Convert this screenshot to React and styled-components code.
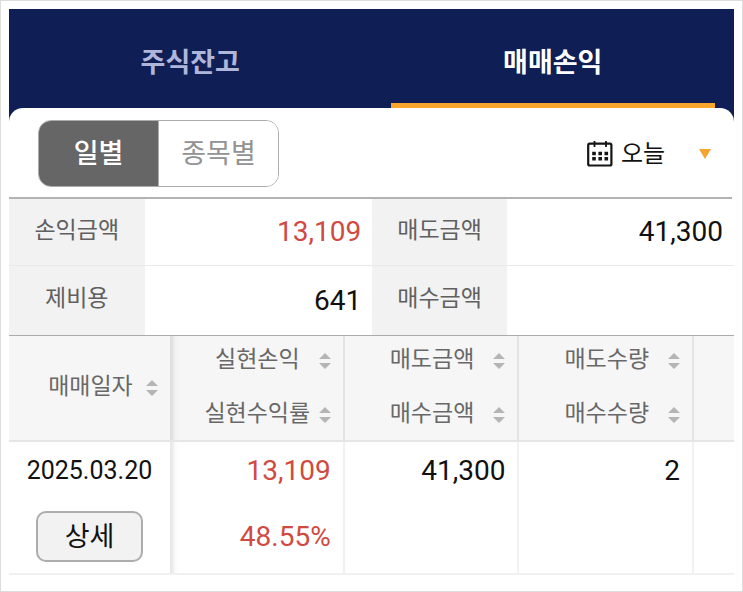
import React, { useState } from "react";
import styled, { createGlobalStyle, css } from "styled-components";

const GlobalStyle = createGlobalStyle`
  *, *::before, *::after { box-sizing: border-box; }
  body {
    margin: 0;
    background: #fff;
    font-family: Roboto, "Noto Sans CJK KR", sans-serif;
    color: #111;
  }
  button, select { font-family: inherit; }
`;

const Frame = styled.main`
  min-height: 100vh;
  padding: 8px;
  border: 1px solid #dcdcdc;
`;

const Nav = styled.nav`
  display: grid;
  grid-template-columns: 1fr 1fr;
  padding-bottom: 14px;
  background: #0f1e54;
`;

const NavTab = styled.button`
  display: flex;
  flex-direction: column;
  align-items: stretch;
  height: 99px;
  padding: 0 19px;
  border: 0;
  background: none;
  font-size: 27px;
  font-weight: 700;
  color: ${(p) => (p.$active ? "#fff" : "#b0b6da")};
  cursor: pointer;
`;

const NavLabel = styled.span`
  flex: 1;
  line-height: 108px;
  height: 94px;
`;

const NavBar = styled.span`
  height: 5px;
  background: ${(p) => (p.$active ? "#f9a62c" : "transparent")};
`;

const Panel = styled.section`
  margin-top: -14px;
  border-radius: 14px 14px 0 0;
  background: #fff;
`;

const Toolbar = styled.div`
  display: flex;
  align-items: center;
  justify-content: space-between;
  margin-right: 2px;
  padding: 12px 21px 10px 29px;
  border-bottom: 2px solid #b2b4b2;
`;

const Segments = styled.div`
  display: grid;
  grid-template-columns: 119px 120px;
  height: 67px;
  border: 1px solid #acacac;
  border-radius: 13px;
  overflow: hidden;
`;

const Segment = styled.button`
  padding: 0 0 4px;
  border: 0;
  font-size: 27px;
  cursor: pointer;
  ${(p) =>
    p.$active
      ? css`
          background: #666;
          color: #fff;
          font-weight: 500;
        `
      : css`
          background: #fff;
          color: #929292;
        `}
  & + & {
    border-left: 1px solid #acacac;
  }
`;

const Period = styled.label`
  display: flex;
  align-items: center;
  gap: 8px;
`;

const PeriodField = styled.span`
  display: grid;
  grid-template-columns: 90px;
  align-items: center;
`;

const PeriodSelect = styled.select`
  grid-area: 1 / 1;
  appearance: none;
  height: 40px;
  padding: 0;
  border: 0;
  background: none;
  font-size: 24px;
  color: #111;
`;

const Caret = styled.svg`
  grid-area: 1 / 1;
  justify-self: end;
  pointer-events: none;
`;

const Table = styled.table`
  width: 100%;
  table-layout: fixed;
  border-collapse: separate;
  border-spacing: 0;
`;

const Col = styled.col`
  width: ${(p) => p.$w};
`;

const SummaryRow = styled.tr`
  height: ${(p) => p.$h};
  & > * {
    border-bottom: 1px solid ${(p) => (p.$last ? "#ababab" : "#e9e9e9")};
  }
`;

const SummaryLabel = styled.th`
  padding: 0 0 3px;
  background: #f2f2f2;
  font-size: 23px;
  line-height: 36px;
  font-weight: 400;
  color: #606060;
`;

const SummaryValue = styled.td`
  padding: 0 11px 0 0;
  text-align: right;
  font-size: 28px;
  line-height: 36px;
  color: ${(p) => (p.$gain ? "#d04a42" : "#111")};
`;

const pinnedEdge = css`
  background-image: linear-gradient(
    to right,
    rgba(0, 0, 0, 0.1) 0,
    rgba(0, 0, 0, 0.07) 3px,
    rgba(0, 0, 0, 0.02) 5px,
    transparent 10px
  );
`;

const HeadCell = styled.th`
  height: 106px;
  padding: 0;
  background-color: #f6f6f6;
  border-bottom: 2px solid #e6e6e6;
  border-right: ${(p) => (p.$plain ? "0" : "2px solid #e4e4e4")};
  ${(p) => p.$shadow && pinnedEdge}
`;

const HeadStack = styled.div`
  display: grid;
  gap: 6px;
`;

const SortButton = styled.button`
  display: grid;
  grid-template-columns: 12px 1fr 12px;
  align-items: center;
  width: 100%;
  height: 48px;
  padding: 0 12px 0 14px;
  border: 0;
  background: none;
  font-size: 23px;
  color: #686868;
  cursor: pointer;
`;

const SortLabel = styled.span`
  grid-column: 2;
  line-height: 46px;
  padding-bottom: 2px;
  white-space: nowrap;
`;

const BodyCell = styled.td`
  padding: 0;
  vertical-align: top;
  border-bottom: 2px solid #f1f1f1;
  border-right: ${(p) => (p.$plain ? "0" : "2px solid #f1f1f1")};
  ${(p) => p.$shadow && pinnedEdge}
`;

const CellStack = styled.div`
  display: grid;
  grid-template-rows: 56px 56px;
  row-gap: 10px;
  align-items: center;
  justify-items: ${(p) => (p.$center ? "center" : "end")};
  padding: ${(p) => (p.$center ? "0 0 9px" : "0 12px 9px 0")};
  font-size: ${(p) => (p.$center ? "25px" : "28px")};
  color: ${(p) => (p.$gain ? "#d04a42" : "#111")};
`;

const DetailButton = styled.button`
  width: 107px;
  height: 51px;
  padding: 0 0 4px;
  border: 2px solid #adadad;
  border-radius: 10px;
  background: #f2f2f2;
  font-size: 27px;
  color: #111;
  cursor: pointer;
`;

function CalendarIcon() {
  return (
    <svg width="26" height="27" viewBox="0 0 26 27" fill="none" stroke="#151515" aria-hidden="true">
      <rect x="1.2" y="3.7" width="23.2" height="21.8" rx="1.5" strokeWidth="2.2" />
      <path d="M7.5 1v6M19 1v6" strokeWidth="1.8" />
      <path d="M5.2 13.5h3.6M11.4 13.5H15M17.5 13.5h3.6M5.2 18.7h3.6M11.4 18.7H15M17.5 18.7h3.6" strokeWidth="3.4" />
    </svg>
  );
}

function SortIcon() {
  return (
    <svg width="12" height="18" viewBox="0 0 12 18" fill="#b5b5b5" aria-hidden="true">
      <path d="M6 1l6 6H0zM0 11h12L6 17z" />
    </svg>
  );
}

function Sort({ children }) {
  return (
    <SortButton type="button">
      <SortLabel>{children}</SortLabel>
      <SortIcon />
    </SortButton>
  );
}

const TABS = ["주식잔고", "매매손익"];
const MODES = ["일별", "종목별"];

export default function App() {
  const [tab, setTab] = useState("매매손익");
  const [mode, setMode] = useState("일별");

  return (
    <Frame>
      <GlobalStyle />
      <Nav>
        {TABS.map((name) => (
          <NavTab key={name} type="button" $active={tab === name} onClick={() => setTab(name)}>
            <NavLabel>{name}</NavLabel>
            <NavBar $active={tab === name} />
          </NavTab>
        ))}
      </Nav>
      <Panel>
        <Toolbar>
          <Segments>
            {MODES.map((name) => (
              <Segment
                key={name}
                type="button"
                aria-pressed={mode === name}
                $active={mode === name}
                onClick={() => setMode(name)}
              >
                {name}
              </Segment>
            ))}
          </Segments>
          <Period>
            <CalendarIcon />
            <PeriodField>
              <PeriodSelect aria-label="오늘">
                <option>오늘</option>
              </PeriodSelect>
              <Caret width="12" height="10" viewBox="0 0 12 10" fill="#f5a52f" aria-hidden="true">
                <path d="M0 0h12L6 10z" />
              </Caret>
            </PeriodField>
          </Period>
        </Toolbar>

        <Table>
          <colgroup>
            <Col $w="18.7%" />
            <Col $w="31.4%" />
            <Col $w="18.6%" />
            <Col />
          </colgroup>
          <tbody>
            <SummaryRow $h="67px">
              <SummaryLabel scope="row">손익금액</SummaryLabel>
              <SummaryValue $gain>13,109</SummaryValue>
              <SummaryLabel scope="row">매도금액</SummaryLabel>
              <SummaryValue>41,300</SummaryValue>
            </SummaryRow>
            <SummaryRow $h="70px" $last>
              <SummaryLabel scope="row">제비용</SummaryLabel>
              <SummaryValue>641</SummaryValue>
              <SummaryLabel scope="row">매수금액</SummaryLabel>
              <SummaryValue />
            </SummaryRow>
          </tbody>
        </Table>

        <Table>
          <colgroup>
            <Col $w="22.2%" />
            <Col $w="24.1%" />
            <Col $w="24.1%" />
            <Col $w="24.1%" />
            <Col />
          </colgroup>
          <thead>
            <tr>
              <HeadCell scope="col" $plain>
                <Sort>매매일자</Sort>
              </HeadCell>
              <HeadCell scope="col" $shadow>
                <HeadStack>
                  <Sort>실현손익</Sort>
                  <Sort>실현수익률</Sort>
                </HeadStack>
              </HeadCell>
              <HeadCell scope="col">
                <HeadStack>
                  <Sort>매도금액</Sort>
                  <Sort>매수금액</Sort>
                </HeadStack>
              </HeadCell>
              <HeadCell scope="col">
                <HeadStack>
                  <Sort>매도수량</Sort>
                  <Sort>매수수량</Sort>
                </HeadStack>
              </HeadCell>
              <HeadCell $plain as="td" />
            </tr>
          </thead>
          <tbody>
            <tr>
              <BodyCell $plain>
                <CellStack $center>
                  <span>2025.03.20</span>
                  <DetailButton type="button">상세</DetailButton>
                </CellStack>
              </BodyCell>
              <BodyCell $shadow>
                <CellStack $gain>
                  <span>13,109</span>
                  <span>48.55%</span>
                </CellStack>
              </BodyCell>
              <BodyCell>
                <CellStack>
                  <span>41,300</span>
                </CellStack>
              </BodyCell>
              <BodyCell>
                <CellStack>
                  <span>2</span>
                </CellStack>
              </BodyCell>
              <BodyCell $plain />
            </tr>
          </tbody>
        </Table>
      </Panel>
    </Frame>
  );
}
